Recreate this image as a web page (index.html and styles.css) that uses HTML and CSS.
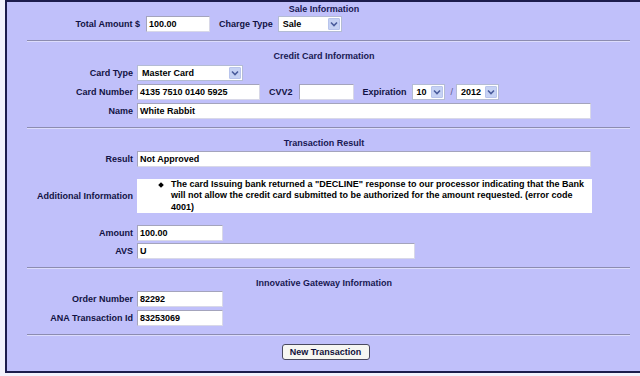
FILE: index.html
```html
<!DOCTYPE html>
<html>
<head>
<meta charset="utf-8">
<link rel="stylesheet" href="styles.css">
</head>
<body>
<div class="panel">
  <div class="title t1">Sale Information</div>
  <div class="row first">
    <span class="lbl wide">Total Amount $</span>
    <span class="field w64">100.00</span>
    <span class="lbl2">Charge Type</span>
    <span class="select w64"><span class="sv">Sale</span><span class="arr"><svg width="8" height="6" viewBox="0 0 8 6"><path d="M1 1.5 L4 4.5 L7 1.5" fill="none" stroke="#4a5c9c" stroke-width="1.6"/></svg></span></span>
  </div>
  <div class="sep"></div>

  <div class="title">Credit Card Information</div>
  <div class="row r3">
    <span class="lbl">Card Type</span>
    <span class="select w106"><span class="sv">Master Card</span><span class="arr"><svg width="8" height="6" viewBox="0 0 8 6"><path d="M1 1.5 L4 4.5 L7 1.5" fill="none" stroke="#4a5c9c" stroke-width="1.6"/></svg></span></span>
  </div>
  <div class="row">
    <span class="lbl">Card Number</span>
    <span class="field w123">4135 7510 0140 5925</span>
    <span class="lbl2 cvv">CVV2</span>
    <span class="field w55"></span>
    <span class="lbl2 exp">Expiration</span>
    <span class="select w33"><span class="sv">10</span><span class="arr"><svg width="8" height="6" viewBox="0 0 8 6"><path d="M1 1.5 L4 4.5 L7 1.5" fill="none" stroke="#4a5c9c" stroke-width="1.6"/></svg></span></span>
    <span class="slash">/</span>
    <span class="select w43"><span class="sv">2012</span><span class="arr"><svg width="8" height="6" viewBox="0 0 8 6"><path d="M1 1.5 L4 4.5 L7 1.5" fill="none" stroke="#4a5c9c" stroke-width="1.6"/></svg></span></span>
  </div>
  <div class="row">
    <span class="lbl">Name</span>
    <span class="field w454">White Rabbit</span>
  </div>
  <div class="sep"></div>

  <div class="title">Transaction Result</div>
  <div class="row r2">
    <span class="lbl">Result</span>
    <span class="field w454">Not Approved</span>
  </div>
  <div class="row info">
    <span class="lbl">Additional Information</span>
    <div class="msg">
      <span class="bullet"></span>
      <p>The card Issuing bank returned a "DECLINE" response to our processor indicating that the Bank<br>will not allow the credit card submitted to be authorized for the amount requested. (error code<br>4001)</p>
    </div>
  </div>
  <div class="row r12">
    <span class="lbl">Amount</span>
    <span class="field w86">100.00</span>
  </div>
  <div class="row r2">
    <span class="lbl">AVS</span>
    <span class="field w278">U</span>
  </div>
  <div class="sep"></div>

  <div class="title">Innovative Gateway Information</div>
  <div class="row r2">
    <span class="lbl">Order Number</span>
    <span class="field w86">82292</span>
  </div>
  <div class="row">
    <span class="lbl">ANA Transaction Id</span>
    <span class="field w86">83253069</span>
  </div>
  <div class="sep"></div>

  <div class="actions">
    <button class="btn">New Transaction</button>
  </div>
</div>
</body>
</html>
```

FILE: styles.css
```css
html, body {
  margin: 0;
  padding: 0;
}
body {
  background: #f2f2fc;
  width: 640px;
  height: 376px;
  overflow: hidden;
  font-family: "Liberation Sans", Arial, sans-serif;
  font-size: 9px;
  font-weight: bold;
  color: #121244;
}
.panel {
  margin-left: 5px;
  width: 640px;
  height: 369px;
  background: #c0c0fa;
  border-top: 2px solid #1c1c4c;
  border-left: 2px solid #1c1c4c;
  border-bottom: 2px solid #1c1c4c;
  box-sizing: content-box;
}
.title {
  height: 12px;
  line-height: 12px;
  text-align: center;
  width: 634px;
  margin-top: 8px;
  color: #181852;
}
.title.t1 {
  margin-top: 1px;
}
.row {
  display: flex;
  align-items: center;
  height: 16px;
  margin-top: 3px;
}
.row.first { margin-top: 1px; }
.row.r2 { margin-top: 2px; }
.row.r3 { margin-top: 3px; }
.row.r12 { margin-top: 12px; }
.lbl {
  width: 126px;
  text-align: right;
  margin-right: 4px;
  white-space: nowrap;
}
.lbl.wide {
  width: 133px;
  margin-right: 6px;
}
.lbl2 {
  margin-left: 9px;
  margin-right: 5px;
  white-space: nowrap;
}
.lbl2.cvv { margin-right: 6px; }
.lbl2.exp { margin-left: 9px; margin-right: 5px; }
.field {
  box-sizing: border-box;
  height: 16px;
  background: #ffffff;
  border: 1px solid #a4a4bc;
  border-right-color: #d8d8e8;
  border-bottom-color: #d8d8e8;
  color: #000000;
  line-height: 14px;
  padding-left: 2px;
  white-space: nowrap;
}
.w64 { width: 64px; }
.w55 { width: 55px; }
.w86 { width: 86px; }
.w106 { width: 106px; }
.w123 { width: 123px; }
.w278 { width: 278px; }
.w454 { width: 454px; }
.w33 { width: 33px; }
.w43 { width: 43px; }
.select {
  box-sizing: border-box;
  height: 16px;
  background: #ffffff;
  border: 1px solid #b4bcd4;
  display: flex;
  align-items: center;
  color: #000000;
}
.sv {
  flex: 1;
  padding-left: 4px;
  line-height: 14px;
  white-space: nowrap;
}
.arr {
  width: 12px;
  height: 12px;
  margin-right: 1px;
  background: #c6d2f4;
  border: 1px solid #b8c4ec;
  box-sizing: border-box;
  border-radius: 1px;
  display: flex;
  align-items: center;
  justify-content: center;
}
.slash {
  margin: 0 3px 0 6px;
  color: #5a5a8a;
  font-weight: normal;
}
.sep {
  margin: 8px 17px 0 20px;
  height: 0;
  border-top: 1px solid #8c8cb0;
  border-bottom: 1px solid #dcdcfc;
}
.row.info {
  height: 34px;
  margin-top: 12px;
}
.msg {
  box-sizing: border-box;
  width: 455px;
  height: 34px;
  background: #ffffff;
  color: #000000;
  display: flex;
  align-items: flex-start;
}
.bullet {
  width: 4px;
  height: 4px;
  background: #000000;
  transform: rotate(45deg);
  margin: 4px 0 0 22px;
  flex: none;
}
.msg p {
  margin: 0 0 0 8px;
  line-height: 11.3px;
  white-space: nowrap;
}
.actions {
  width: 634px;
  display: flex;
  justify-content: center;
  margin-top: 8px;
}
.btn {
  box-sizing: border-box;
  height: 16px;
  width: 88px;
  padding: 0;
  font-family: "Liberation Sans", Arial, sans-serif;
  font-size: 9px;
  font-weight: bold;
  color: #10103a;
  background: #f6f6f2;
  border: 1px solid #4a4a60;
  border-radius: 3px;
  margin-left: 3px;
}
```
